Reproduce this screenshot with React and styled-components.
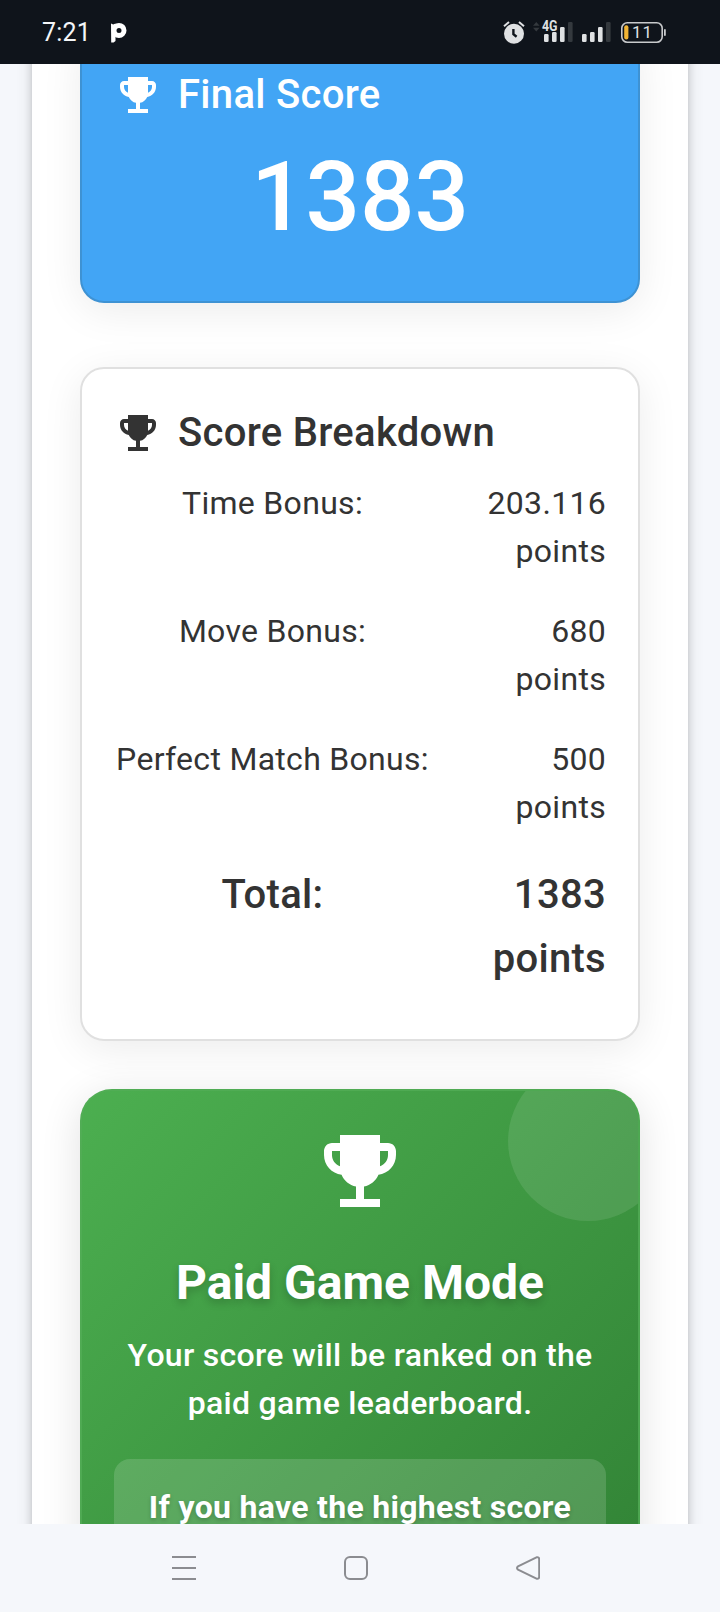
import React from "react";
import styled, { createGlobalStyle } from "styled-components";

const GlobalStyle = createGlobalStyle`
  *, *::before, *::after { box-sizing: border-box; }
  html, body { margin: 0; padding: 0; }
  body {
    font-family: Roboto, "Liberation Sans", sans-serif;
    background: #f5f7fb;
    color: #333;
  }
`;

const Screen = styled.div`
  width: 720px;
  height: 1612px;
  display: flex;
  flex-direction: column;
  overflow: hidden;
  background: #f5f7fb;
`;

const StatusBar = styled.header`
  flex: 0 0 64px;
  display: flex;
  align-items: center;
  justify-content: space-between;
  padding: 2px 54px 0 42px;
  background: #0f141b;
`;

const StatusGroup = styled.div`
  display: flex;
  align-items: center;
  gap: ${(p) => p.$gap}px;
`;

const Clock = styled.span`
  font-size: 25px;
  line-height: 30px;
  letter-spacing: 0.2px;
  color: #f4f6f8;
`;

const StatusSvg = styled.svg`
  display: block;
  flex: none;
  overflow: visible;
  font-family: Roboto, sans-serif;
`;

const Viewport = styled.main`
  flex: 0 0 1460px;
  overflow: hidden;
  padding: 0 32px;
  display: flex;
  flex-direction: column;
`;

const Paper = styled.div`
  height: 1800px;
  flex: none;
  margin-top: -100px;
  padding: 65px 48px 0;
  background: #fff;
  box-shadow: 0 6px 6px -4px rgba(0, 0, 0, 0.2), 0 6px 8px rgba(0, 0, 0, 0.14),
    0 2px 16px rgba(0, 0, 0, 0.12);
`;

const Card = styled.section`
  padding: 32px 32px 48px;
  border: 2px solid ${(p) => (p.$filled ? "#3e92d3" : "#e0e0e0")};
  border-radius: 24px;
  background: ${(p) => (p.$filled ? "#42a5f5" : "#fff")};
  color: ${(p) => (p.$filled ? "#fff" : "#333")};
  box-shadow: 0 8px 40px rgba(0, 0, 0, 0.08);
  margin-bottom: ${(p) => p.$after}px;
`;

const Heading = styled.h2`
  display: flex;
  align-items: center;
  gap: 16px;
  margin: 0 0 14px;
  font-size: 40px;
  line-height: 64px;
  font-weight: 500;
  letter-spacing: 0.3px;
`;

const Trophy = styled.svg.attrs({ viewBox: "0 0 24 24" })`
  display: block;
  flex: none;
  width: ${(p) => p.$size}px;
  height: ${(p) => p.$size}px;
  fill: currentColor;
`;

const BigScore = styled.div`
  font-size: 96px;
  line-height: 112px;
  font-weight: 500;
  text-align: center;
`;

const Rows = styled.div`
  display: flex;
  flex-direction: column;
  gap: 32px;
`;

const Row = styled.div`
  display: flex;
  justify-content: space-between;
  align-items: flex-start;
  font-size: ${(p) => (p.$total ? 40 : 32)}px;
  line-height: ${(p) => (p.$total ? 64 : 48)}px;
  font-weight: ${(p) => (p.$total ? 500 : 400)};
  letter-spacing: 0.3px;
`;

const RowLabel = styled.span`
  width: 317px;
  text-align: center;
  white-space: nowrap;
`;

const RowValue = styled.span`
  width: 130px;
  text-align: right;
`;

const ModeCard = styled.section`
  position: relative;
  overflow: hidden;
  height: 640px;
  padding: 32px;
  border: 2px solid rgba(82, 172, 86, 0.8);
  border-radius: 32px;
  background: linear-gradient(135deg, #4caf50 0%, #2e7d32 100%) border-box;
  box-shadow: 0 8px 40px rgba(0, 0, 0, 0.12);
  color: #fff;
  display: flex;
  flex-direction: column;
  align-items: center;
  text-align: center;

  &::before {
    content: "";
    position: absolute;
    top: -30px;
    right: -30px;
    width: 160px;
    height: 160px;
    border-radius: 50%;
    background: rgba(255, 255, 255, 0.1);
  }
`;

const ModeTitle = styled.h2`
  margin: 32px 0 16px;
  font-size: 48px;
  line-height: 64px;
  font-weight: 700;
  text-shadow: 0 4px 8px rgba(0, 0, 0, 0.2);
`;

const ModeText = styled.p`
  margin: 0 0 32px;
  font-size: 32px;
  line-height: 48px;
  font-weight: 500;
  letter-spacing: 0.3px;
`;

const Notice = styled.div`
  width: 100%;
  flex: 1;
  padding: 24px;
  border-radius: 16px;
  background: rgba(255, 255, 255, 0.15);
  font-size: 32px;
  line-height: 48px;
  font-weight: 700;
  letter-spacing: 0.3px;
  text-shadow: 0 2px 4px rgba(0, 0, 0, 0.2);
`;

const NavBar = styled.nav`
  flex: 0 0 88px;
  display: flex;
  align-items: center;
  gap: 148px;
  padding-left: 172px;
  background: #f5f7fb;
`;

const NavIcon = styled.svg.attrs({ viewBox: "0 0 24 24" })`
  display: block;
  width: 24px;
  height: 24px;
  fill: none;
  stroke: #8b8c90;
  stroke-width: 2;
  stroke-linejoin: round;
`;

const TrophyIcon = ({ size }) => (
  <Trophy $size={size}>
    <path d="M19 5h-2V3H7v2H5c-1.1 0-2 .9-2 2v1c0 2.55 1.92 4.63 4.39 4.94.63 1.5 1.98 2.63 3.61 2.96V19H7v2h10v-2h-4v-3.1c1.63-.33 2.98-1.46 3.61-2.96C19.08 12.63 21 10.55 21 8V7c0-1.1-.9-2-2-2zM5 8V7h2v3.82C5.84 10.4 5 9.3 5 8zm14 0c0 1.3-.84 2.4-2 2.82V7h2v1z" />
  </Trophy>
);

const CardHeading = ({ children }) => (
  <Heading>
    <TrophyIcon size={48} />
    {children}
  </Heading>
);

const AppLogo = () => (
  <StatusSvg width="16" height="20" viewBox="0 0 16 20">
    <path d="M0 0.4 2.2 1.4 4.5 0.4V18L2.6 19.6H0.2Z" fill="#fff" />
    <circle cx="8" cy="7.4" r="5" fill="none" stroke="#fff" strokeWidth="5" />
  </StatusSvg>
);

const AlarmIcon = () => (
  <StatusSvg width="22" height="24" viewBox="0 0 22 24">
    <circle cx="11" cy="12.8" r="10" fill="#dfe1e3" />
    <path d="M1 5.2 6 1M21 5.2 16 1" stroke="#dfe1e3" strokeWidth="2" />
    <path d="M10.4 8v5.2l3.2 2.6" fill="none" stroke="#0f141b" strokeWidth="2.4" />
  </StatusSvg>
);

const BARS = [
  [0, 12, 8],
  [8, 10, 10],
  [16, 5, 15],
  [24, 0, 20],
];

const Bars = ({ x }) =>
  BARS.map(([dx, y, h], i) => (
    <rect key={dx} x={x + dx} y={y} width="4.6" height={h} rx="1.2" fill={i === 3 ? "#34393e" : "#dfe1e3"} />
  ));

const MobileSignal = () => (
  <StatusSvg width="42" height="22" viewBox="0 0 42 22">
    <path d="M3 3.8 6.3 0l3.3 3.8zM3 5.8 6.3 9.4l3.3-3.6z" fill="#34393e" />
    <Bars x={14} />
    <text x="12" y="9" fontSize="14" fontWeight="700" textLength="15.5" lengthAdjust="spacingAndGlyphs" fill="#dfe1e3" stroke="#0f141b" strokeWidth="2" paintOrder="stroke">
      4G
    </text>
  </StatusSvg>
);

const Signal = () => (
  <StatusSvg width="28" height="22" viewBox="0 0 28 22">
    <Bars x={0} />
  </StatusSvg>
);

const Battery = () => (
  <StatusSvg width="46" height="22" viewBox="0 0 46 22">
    <rect x="1.8" y="0.8" width="40.4" height="19.4" rx="5.5" fill="none" stroke="#c8cacc" strokeWidth="1.6" />
    <rect x="4.2" y="3.2" width="4.2" height="14.2" rx="2" fill="#f1b434" />
    <rect x="44" y="7" width="1.8" height="7" rx="0.9" fill="#c8cacc" />
    <text x="22.4" y="16.4" textAnchor="middle" fontSize="17" letterSpacing="0.8" fill="#dfe1e3">
      11
    </text>
  </StatusSvg>
);

const ROWS = [
  { label: "Time Bonus:", value: "203.116 points" },
  { label: "Move Bonus:", value: "680 points" },
  { label: "Perfect Match Bonus:", value: "500 points" },
  { label: "Total:", value: "1383 points", total: true },
];

export default function App() {
  return (
    <>
      <GlobalStyle />
      <Screen>
        <StatusBar>
          <StatusGroup $gap={20}>
            <Clock>7:21</Clock>
            <AppLogo />
          </StatusGroup>
          <StatusGroup $gap={5}>
            <AlarmIcon />
            <StatusGroup $gap={10}>
              <MobileSignal />
              <Signal />
              <Battery />
            </StatusGroup>
          </StatusGroup>
        </StatusBar>

        <Viewport>
          <Paper>
            <Card $filled $after={64}>
              <CardHeading>Final Score</CardHeading>
              <BigScore>1383</BigScore>
            </Card>

            <Card $after={48}>
              <CardHeading>Score Breakdown</CardHeading>
              <Rows>
                {ROWS.map((row) => (
                  <Row key={row.label} $total={row.total}>
                    <RowLabel>{row.label}</RowLabel>
                    <RowValue>{row.value}</RowValue>
                  </Row>
                ))}
              </Rows>
            </Card>

            <ModeCard>
              <TrophyIcon size={96} />
              <ModeTitle>Paid Game Mode</ModeTitle>
              <ModeText>Your score will be ranked on the paid game leaderboard.</ModeText>
              <Notice>If you have the highest score</Notice>
            </ModeCard>
          </Paper>
        </Viewport>

        <NavBar>
          <NavIcon>
            <path d="M0 1h24M0 12h24M0 23h24" />
          </NavIcon>
          <NavIcon>
            <rect x="1" y="1" width="22" height="22" rx="5" />
          </NavIcon>
          <NavIcon>
            <path d="M21 1.2 2 10.4Q0 12 2 13.6L21 22.8Q23.2 23 23.2 20.5V3.5Q23.2 1 21 1.2Z" />
          </NavIcon>
        </NavBar>
      </Screen>
    </>
  );
}
